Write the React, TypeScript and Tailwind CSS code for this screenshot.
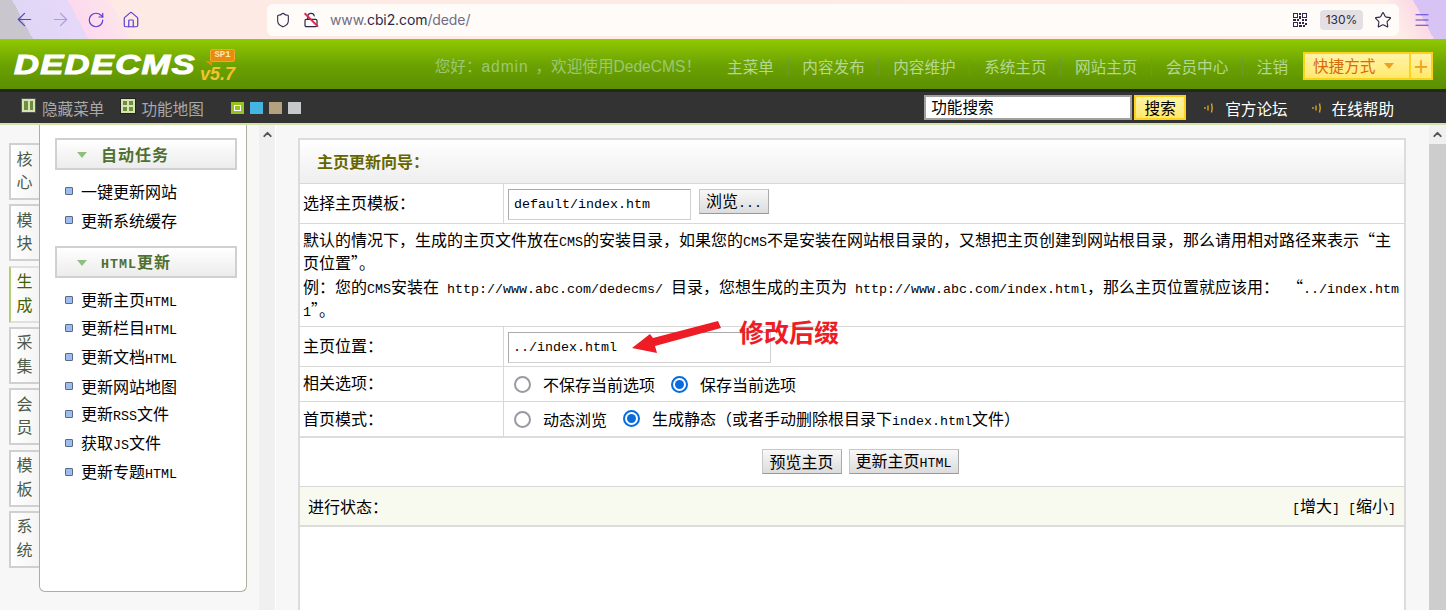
import React from 'react';
import { ArrowLeft, ArrowRight, RotateCw, House, Shield, LockOpen, Star, Menu, ChevronUp } from 'lucide-react';

const tabs = [
  { a: '核', b: '心' },
  { a: '模', b: '块' },
  { a: '生', b: '成', active: true },
  { a: '采', b: '集' },
  { a: '会', b: '员' },
  { a: '模', b: '板' },
  { a: '系', b: '统' },
];

// latin text inside the bitmap-looking cjk rows is half width (8px a char)
function M({ children }: { children: React.ReactNode }) {
  return <span className="font-['Liberation_Mono',monospace] text-[13.33px]">{children}</span>;
}

function SideHead({ children }: { children: React.ReactNode }) {
  return (
    <div className="h-[32px] ml-[15px] mr-[9px] border-2 border-[#d0d0d0] bg-gradient-to-b from-white to-[#ececec] flex items-center pl-[20px] font-bold text-[#4f7030]">
      <span className="w-0 h-0 border-x-[5px] border-x-transparent border-t-[6px] border-t-[#8fbf7f] mr-[14px] mt-[2px]" />
      <span className="tracking-[1px]">{children}</span>
    </div>
  );
}

function SideItem({ children }: { children: React.ReactNode }) {
  return (
    <div className="h-[28.7px] flex items-center pl-[25px] text-black whitespace-nowrap">
      <span className="w-[8px] h-[8px] border border-[#5a6a80] bg-[#9dbdf0] rounded-[1px] mr-[8px]" />
      <span>{children}</span>
    </div>
  );
}

function Row({ label, h, children }: { label: string; h: string; children: React.ReactNode }) {
  return (
    <div className={`flex ${h} border-b border-[#d8d8d8]`}>
      <div className="w-[204px] shrink-0 border-r border-[#d8d8d8] pl-[3px] pb-[4px] flex items-center">{label}</div>
      <div className="flex-1 flex items-center pl-[4px]">{children}</div>
    </div>
  );
}

function Radio({ on, label }: { on?: boolean; label: React.ReactNode }) {
  return (
    <span className="flex items-center ml-[6px] mr-[10px] whitespace-nowrap">
      <span className={`w-[17px] h-[17px] rounded-full border-2 mr-[12px] flex items-center justify-center bg-white ${on ? 'border-[#0a6cdc]' : 'border-[#9a98a4]'}`}>
        {on && <span className="w-[9px] h-[9px] rounded-full bg-[#0a6cdc]" />}
      </span>
      {label}
    </span>
  );
}

function Btn({ children, w }: { children: React.ReactNode; w: string }) {
  return (
    <button className={`${w} h-[25px] bg-gradient-to-b from-[#f8f8f8] to-[#dcdcdc] border border-[#c8c8c8] border-b-[#999] border-r-[#aaa] flex items-center justify-center whitespace-nowrap`}>
      {children}
    </button>
  );
}

function Signal() {
  return (
    <svg width="12" height="12" viewBox="0 0 12 12" fill="none" stroke="#d9a514" strokeWidth="1.4">
      <path d="M2 5v2" />
      <path d="M5 3.5v5" />
      <path d="M8.5 1.5c1 3 1 6 0 9" />
    </svg>
  );
}

function Qr() {
  return (
    <svg width="16" height="16" viewBox="0 0 16 16" fill="#2b2a44">
      <path d="M1 1h5v5H1zM2 2v3h3V2zM10 1h5v5h-5zM11 2v3h3V2zM1 10h5v5H1zM2 11v3h3v-3z" fillRule="evenodd" />
      <path d="M7 1h2v2H7zM7 4h2v3H7zM1 7h3v2H1zM5 7h2v2H5zM10 7h2v2h-2zM13 7h2v2h-2zM7 10h2v2H7zM10 10h2v2h-2zM13 11h2v2h-2zM7 13h3v2H7zM11 13h2v2h-2z" />
    </svg>
  );
}

export default function App() {
  return (
    <div className="relative w-[1446px] h-[610px] overflow-hidden flex flex-col bg-[#f7f7f7] text-black text-[15.6px] font-['Noto_Sans_CJK_SC',sans-serif] [font-feature-settings:'fwid']">
      {/* browser toolbar */}
      <div className="h-[40px] shrink-0 flex items-center bg-[linear-gradient(62deg,#c9c7cd_29px,#e0d6f6_29px,#e6d8f8_78px,#fcd9ef_78px,#fde4ea_115px,#feeae4_115px,#feece6_1240px,#fbd9e6_1266px,#d8c4f4_1266px)] border-b border-[#b79aa8]">
        <div className="w-[267px] shrink-0 flex items-center pl-[14px]">
          <ArrowLeft size={21} strokeWidth={1.4} className="text-[#5b3fd0]" />
          <ArrowRight size={21} strokeWidth={1.4} className="text-[#ab9ce6] ml-[15px]" />
          <RotateCw size={18} strokeWidth={1.6} className="text-[#5b3fd0] ml-[16px]" />
          <House size={18} strokeWidth={1.6} className="text-[#5b3fd0] ml-[17px]" />
        </div>
        <div className="w-[1132px] shrink-0 h-[32px] bg-[#fffbf9] rounded-[6px] flex items-center pl-[8px] pr-[7px]">
          <Shield size={16} strokeWidth={1.6} className="text-[#2b2a44]" />
          <span className="relative ml-[12px]">
            <LockOpen size={16} strokeWidth={1.8} className="text-[#2b2a44]" />
            <span className="absolute left-[-1px] top-[7px] w-[19px] h-[1.5px] bg-[#e22850] rotate-45" />
          </span>
          <span className="ml-[11px] text-[14px] font-['Inter',sans-serif] text-[#6f6d85] tracking-[-0.1px]">
            www.<span className="text-[#2b2a44]">cbi2.com</span>/dede/
          </span>
          <div className="ml-auto flex items-center">
            <Qr />
            <span className="ml-[12px] w-[43px] h-[20px] bg-[#e4dfe3] rounded-[4px] text-[12px] font-['Inter',sans-serif] text-[#2b2a44] flex items-center justify-center">130%</span>
            <Star size={18} strokeWidth={1.5} className="ml-[11px] text-[#2b2a44]" />
          </div>
        </div>
        <Menu size={18} strokeWidth={1.5} className="text-[#5b3fd0] ml-[14px] shrink-0" />
      </div>

      {/* green header */}
      <div className="h-[49px] shrink-0 bg-gradient-to-b from-[#8fc800] via-[#6da203] to-[#5a8f00] flex items-center pl-[14px] pr-[13px] pt-[4px] text-[#b4d892]">
        <div className="relative w-[226px] h-[30px] flex items-center mt-[-3px]">
          <span className="font-['Liberation_Sans',sans-serif] italic font-bold text-[27px] text-white tracking-[1px] leading-none scale-x-[1.28] origin-left [-webkit-text-stroke:1px_white]">DEDECMS</span>
          <span className="absolute left-[186px] top-[15px] font-['Liberation_Sans',sans-serif] italic font-bold text-[18px] text-[#f4c22c] leading-none">v5.7</span>
          <span className="absolute left-[196px] top-[-1px] w-[25px] h-[13px] rounded-[2px] bg-[#e88c10] border border-[#f0a830] text-[9px] text-center font-['Liberation_Mono',monospace] font-bold text-[#ffe8b0] leading-[11px]">SP1</span>
          <span className="absolute left-[191px] top-[11px] w-0 h-0 border-l-[7px] border-l-transparent border-t-[5px] border-t-[#e88c10]" />
        </div>
        <span className="ml-auto text-[#9cc873] whitespace-nowrap">您好：<span className="font-['Liberation_Sans',sans-serif] tracking-[0.9px]">admin</span><span className="ml-[7px]">，</span>欢迎使用<span className="font-['Liberation_Sans',sans-serif]">DedeCMS</span>！</span>
        <span className="ml-[26px] whitespace-nowrap">主菜单</span>
        {['内容发布', '内容维护', '系统主页', '网站主页', '会员中心', '注销'].map(t => (
          <React.Fragment key={t}>
            <span className="w-px h-[17px] bg-[#6f9a30] mx-[13.75px]" />
            <span className="whitespace-nowrap">{t}</span>
          </React.Fragment>
        ))}
        <div className="ml-[15px] h-[28px] w-[130px] flex border-2 border-[#fcd21c] bg-gradient-to-b from-[#fff3a8] to-[#ffe96a] text-[#d86a0a] mt-[-2px]">
          <span className="flex-1 flex items-center pl-[8px] whitespace-nowrap">
            快捷方式
            <span className="ml-[9px] w-0 h-0 border-x-[5px] border-x-transparent border-t-[6px] border-t-[#f0a020]" />
          </span>
          <span className="w-[22px] border-l-2 border-[#fcd21c] flex items-center justify-center text-[#f0a020] font-bold text-[17px]">+</span>
        </div>
      </div>

      {/* dark bar */}
      <div className="h-[34px] shrink-0 bg-[#333] border-t-[3px] border-[#23290f] flex items-center pl-[21px] text-[#a8a8a8]">
        <span className="w-[15px] h-[15px] bg-[#d5e3b5] border border-[#555] flex gap-[2px] p-[2px] mr-[6px] mt-[-4px]">
          <span className="flex-1 bg-[#6d8f3a]" />
          <span className="flex-1 bg-[#6d8f3a]" />
        </span>
        <span className="whitespace-nowrap mt-[2px]">隐藏菜单</span>
        <span className="ml-[16px] w-[16px] h-[16px] bg-[#d5e3b5] border border-[#222] grid grid-cols-2 gap-[2px] p-[2px] mr-[5px] mt-[-4px]">
          <span className="bg-[#6d8f3a]" />
          <span className="bg-[#6d8f3a]" />
          <span className="bg-[#6d8f3a]" />
          <span className="bg-[#6d8f3a]" />
        </span>
        <span className="whitespace-nowrap mt-[2px]">功能地图</span>
        <div className="ml-[27px] flex gap-[6px]">
          <span className="w-[13px] h-[12px] bg-[#95c41f] flex items-center justify-center">
            <span className="w-[7px] h-[6px] border border-white" />
          </span>
          <span className="w-[13px] h-[12px] bg-[#44b4e0]" />
          <span className="w-[13px] h-[12px] bg-[#b4a27e]" />
          <span className="w-[13px] h-[12px] bg-[#c6c8ca]" />
        </div>
        <input readOnly value="功能搜索" className="ml-auto w-[208px] h-[25px] mt-[-1px] bg-white border-2 border-[#a0a0a0] pl-[5px] pb-[2px] text-black outline-none" />
        <span className="ml-[2px] w-[52px] h-[25px] border-2 border-[#fcd21c] bg-gradient-to-b from-[#fff3a8] to-[#ffe96a] text-black flex items-center justify-center">搜索</span>
        <span className="ml-[17px]"><Signal /></span>
        <span className="ml-[10px] text-white whitespace-nowrap mt-[2px]">官方论坛</span>
        <span className="ml-[23px]"><Signal /></span>
        <span className="ml-[9px] mr-[52px] text-white whitespace-nowrap mt-[2px]">在线帮助</span>
      </div>
      <div className="h-[2px] shrink-0 bg-[#d3e2ac]" />

      {/* body */}
      <div className="flex-1 flex min-h-0 text-[16px]">
        <div className="w-[259px] shrink-0 flex pl-[9px]">
          <div className="w-[30px] shrink-0 pt-[18px] flex flex-col gap-[4.33px]">
            {tabs.map((t, i) => (
              <div
                key={i}
                className={`h-[57px] border-l-2 border-y-2 flex flex-col items-center justify-center leading-[23.5px] pb-[3px] pr-[1px] bg-gradient-to-r from-white to-[#f4f4f4] ${t.active ? 'border-l-[#b0d070] border-y-[#e0e0e0] text-[#3f6000]' : 'border-[#d0d0d0] text-[#4d5a45]'}`}
              >
                <span>{t.a}</span>
                <span>{t.b}</span>
              </div>
            ))}
          </div>
          <div className="w-[208px] h-[467px] shrink-0 bg-white border-x border-b border-[#aab09a] rounded-b-[6px] pt-[13px]">
            <SideHead>自动任务</SideHead>
            <div className="pt-[7px] pb-[12px]">
              <SideItem>一键更新网站</SideItem>
              <SideItem>更新系统缓存</SideItem>
            </div>
            <SideHead><M><b>HTML</b></M>更新</SideHead>
            <div className="pt-[7px]">
              <SideItem>更新主页<M>HTML</M></SideItem>
              <SideItem>更新栏目<M>HTML</M></SideItem>
              <SideItem>更新文档<M>HTML</M></SideItem>
              <SideItem>更新网站地图</SideItem>
              <SideItem>更新<M>RSS</M>文件</SideItem>
              <SideItem>获取<M>JS</M>文件</SideItem>
              <SideItem>更新专题<M>HTML</M></SideItem>
            </div>
          </div>
        </div>

        {/* left frame scrollbar strip */}
        <div className="w-[17px] shrink-0 bg-[#f0f0f0] border-r border-white flex justify-center pt-[3px]">
          <ChevronUp size={13} strokeWidth={3.5} className="text-[#555]" />
        </div>

        {/* main frame */}
        <div className="flex-1 min-w-0 pl-[22px] pr-[23px] pt-[13px] overflow-hidden">
          <div className="h-[600px] bg-white border-2 border-b-0 border-[#dcdcdc]">
            <div className="h-[44px] border-b border-[#d8d8d8] bg-gradient-to-b from-white to-[#eeeeee] flex items-center pl-[17px] pb-[2px] font-bold text-[#666600]">主页更新向导：</div>
            <Row label="选择主页模板：" h="h-[40px]">
              <input readOnly value="default/index.htm" className="w-[183px] h-[31px] mt-[1px] border border-[#aaa] border-r-[#d0d0d0] border-b-[#d0d0d0] pl-[5px] font-['Liberation_Mono',monospace] text-[13.33px] outline-none" />
              <Btn w="w-[70px] ml-[8px] mt-[-5px]"><span>浏览<M>...</M></span></Btn>
            </Row>
            <div className="h-[103px] border-b border-[#d8d8d8] pl-[3px] pt-[4px] leading-[23.4px] whitespace-nowrap overflow-hidden">
              <div className="h-[23.4px]">默认的情况下，生成的主页文件放在<M>CMS</M>的安装目录，如果您的<M>CMS</M>不是安装在网站根目录的，又想把主页创建到网站根目录，那么请用相对路径来表示“主</div>
              <div className="h-[23.4px]">页位置”。</div>
              <div className="h-[23.4px]">例：您的<M>CMS</M>安装在<M> http://www.abc.com/dedecms/ </M>目录，您想生成的主页为<M> http://www.abc.com/index.html</M>，那么主页位置就应该用：<M> </M>“<M>../index.htm</M></div>
              <div className="h-[23.4px]"><M>1</M>”。</div>
            </div>
            <Row label="主页位置：" h="h-[40px]">
              <input readOnly value="../index.html" className="w-[263px] h-[31px] mt-[1px] border border-[#aaa] border-r-[#d0d0d0] border-b-[#d0d0d0] pl-[4px] font-['Liberation_Mono',monospace] text-[13.33px] outline-none" />
            </Row>
            <Row label="相关选项：" h="h-[35px]">
              <Radio label="不保存当前选项" />
              <Radio on label="保存当前选项" />
            </Row>
            <div className="border-b-2 border-[#dcdcdc]">
              <div className="flex h-[34px]">
                <div className="w-[204px] shrink-0 border-r border-[#d8d8d8] pl-[3px] pb-[2px] flex items-center">首页模式：</div>
                <div className="flex-1 flex items-center pl-[4px]">
                  <Radio label="动态浏览" />
                  <Radio on label={<span>生成静态（或者手动删除根目录下<M>index.html</M>文件）</span>} />
                </div>
              </div>
            </div>
            <div className="h-[49px] border-b border-[#d8d8d8] flex items-center justify-center gap-[7px] pl-[16px] pb-[2px]">
              <Btn w="w-[80px]">预览主页</Btn>
              <Btn w="w-[110px]"><span>更新主页<M>HTML</M></span></Btn>
            </div>
            <div className="h-[40px] border-b-2 border-[#dcdcdc] bg-[#f9faef] flex items-center justify-between pl-[8px] pr-[8px]">
              <span>进行状态：</span>
              <span><M>[</M>增大<M>] [</M>缩小<M>]</M></span>
            </div>
          </div>
        </div>

        {/* main frame scrollbar */}
        <div className="w-[17px] shrink-0 bg-[#f0f0f0] flex flex-col items-center">
          <div className="h-[19px] flex items-center justify-center shrink-0">
            <ChevronUp size={13} strokeWidth={3.5} className="text-[#555]" />
          </div>
          <div className="flex-1 w-full bg-[#cdcdcd]" />
        </div>
      </div>

      {/* annotation put on top of the screenshot */}
      <svg className="absolute left-[630px] top-[318px]" width="95" height="40" viewBox="0 0 95 40">
        <path d="M88 3 L23 20 L20 16 L2 30 L27 35 L25 28 L91 10 Z" fill="#ee1c25" />
      </svg>
      <span className="absolute left-[739px] top-[316px] text-[25px] font-bold text-[#ee1c25] leading-[30px] whitespace-nowrap">修改后缀</span>
    </div>
  );
}
